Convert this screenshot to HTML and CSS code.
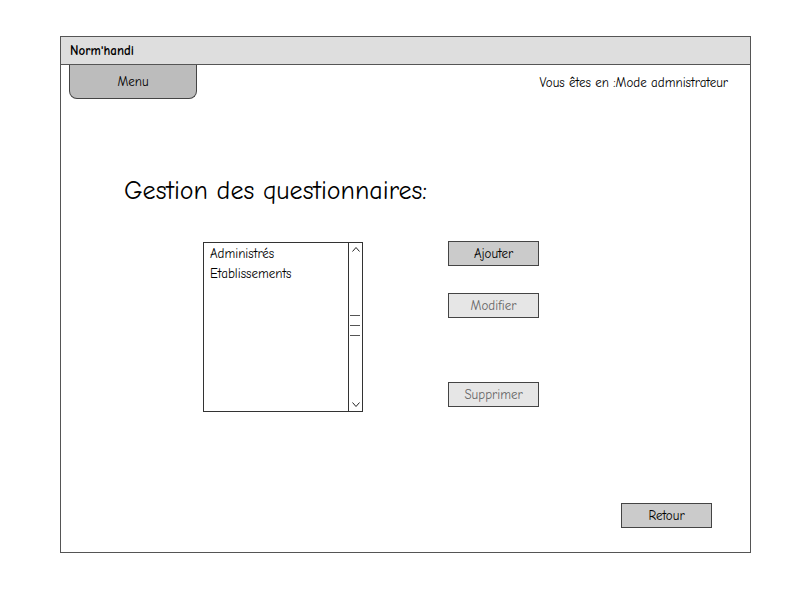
FILE: index.html
```html
<!DOCTYPE html>
<html lang="fr">
<head>
<meta charset="utf-8">
<title>Norm'handi</title>
<link rel="stylesheet" href="styles.css">
</head>
<body>
<div class="frame">
  <div class="titlebar">Norm'handi</div>
  <div class="topbar">
    <div class="menu-tab">Menu</div>
    <div class="status">Vous êtes en :Mode admnistrateur</div>
  </div>
  <h1 class="heading">Gestion des questionnaires:</h1>
  <div class="content">
    <div class="listbox">
      <ul class="items">
        <li>Administrés</li>
        <li>Etablissements</li>
      </ul>
      <div class="scrollbar">
        <svg class="arrow" width="14" height="14" viewBox="0 0 14 14"><path d="M3.5 8.5 L7 4.5 L10.5 8.5" fill="none" stroke="#222" stroke-width="1"/></svg>
        <svg class="grip" width="14" height="24" viewBox="0 0 14 24"><path d="M1 2.5 H11 M1 12.5 H11 M1 22.5 H11" stroke="#555" stroke-width="1"/></svg>
        <svg class="arrow" width="14" height="14" viewBox="0 0 14 14"><path d="M3.5 5.5 L7 9.5 L10.5 5.5" fill="none" stroke="#222" stroke-width="1"/></svg>
      </div>
    </div>
    <div class="actions">
      <div class="btn primary">Ajouter</div>
      <div class="btn disabled gap-sm">Modifier</div>
      <div class="btn disabled gap-lg">Supprimer</div>
    </div>
  </div>
  <div class="footer">
    <div class="btn primary">Retour</div>
  </div>
</div>
</body>
</html>
```
FILE: styles.css
```css
html, body {
  margin: 0;
  padding: 0;
  background: #fff;
}
body {
  font-family: "Comic Sans MS", "Comic Neue", "DejaVu Sans", sans-serif;
  color: #000;
}
.frame {
  box-sizing: border-box;
  margin: 36px 0 0 60px;
  width: 691px;
  height: 517px;
  border: 1px solid #555;
  display: flex;
  flex-direction: column;
}
.titlebar {
  height: 27px;
  background: #dedede;
  border-bottom: 1px solid #555;
  font-size: 13px;
  font-weight: bold;
  line-height: 27px;
  padding-left: 9px;
}
.topbar {
  display: flex;
  justify-content: space-between;
  align-items: flex-start;
  height: 34px;
}
.menu-tab {
  box-sizing: border-box;
  margin-left: 8px;
  width: 128px;
  height: 34px;
  background: #bcbcbc;
  border: 1px solid #444;
  border-top: none;
  border-radius: 0 0 8px 8px;
  font-size: 13px;
  line-height: 34px;
  text-align: center;
}
.status {
  font-size: 13px;
  margin-right: 22px;
  line-height: 36px;
}
.heading {
  margin: 78px 0 0 63px;
  font-size: 26px;
  font-weight: normal;
  line-height: 28px;
  height: 28px;
}
.content {
  display: flex;
  margin-top: 37px;
  margin-left: 142px;
  align-items: flex-start;
}
.listbox {
  box-sizing: border-box;
  width: 160px;
  height: 170px;
  border: 1px solid #333;
  display: flex;
}
.items {
  flex: 1;
  list-style: none;
  margin: 0;
  padding: 1px 0 0 6px;
  font-size: 13px;
}
.items li {
  line-height: 20px;
}
.scrollbar {
  box-sizing: border-box;
  width: 14px;
  border-left: 1px solid #333;
  display: flex;
  flex-direction: column;
  justify-content: space-between;
  align-items: center;
}
.grip {
  margin-bottom: 4px;
}
.actions {
  margin-left: 85px;
  margin-top: -1px;
  display: flex;
  flex-direction: column;
}
.btn {
  box-sizing: border-box;
  width: 91px;
  height: 25px;
  border: 1px solid #444;
  font-size: 13px;
  line-height: 23px;
  text-align: center;
}
.primary {
  background: #cbcbcb;
  color: #000;
}
.disabled {
  background: #e6e6e6;
  color: #666;
}
.gap-sm {
  margin-top: 27px;
}
.gap-lg {
  margin-top: 64px;
}
.footer {
  margin-top: auto;
  margin-bottom: 24px;
  display: flex;
  justify-content: flex-end;
  padding-right: 38px;
}
```
